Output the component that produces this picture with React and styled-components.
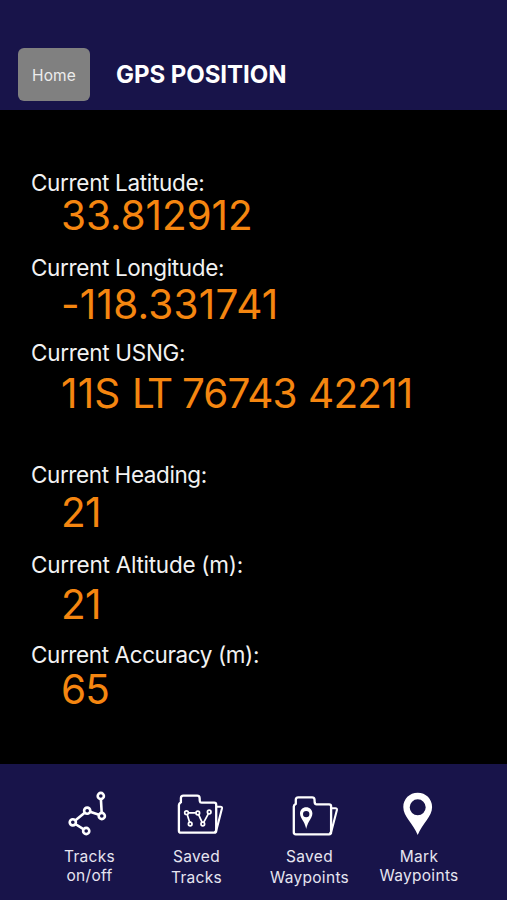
import React from "react";
import styled, { createGlobalStyle } from "styled-components";

const GlobalStyle = createGlobalStyle`
	* {
		box-sizing: border-box;
	}
	body {
		margin: 0;
		background-color: #000;
		font-family: Inter, Roboto, "Liberation Sans", sans-serif;
	}
`;

const Screen = styled.div`
	display: flex;
	flex-direction: column;
	width: 507px;
	height: 900px;
	overflow: hidden;
	background-color: #000;
`;

const Header = styled.header`
	display: flex;
	align-items: flex-start;
	height: 110px;
	padding: 48px 18px 0;
	background-color: #18144a;
`;

const HomeButton = styled.button`
	width: 72px;
	height: 53px;
	padding: 1px 0 0;
	border: 0;
	border-radius: 6px;
	background-color: #808080;
	color: #ececec;
	font-family: inherit;
	font-size: 15.5px;
	letter-spacing: 0.1px;
`;

const Title = styled.h1`
	margin: 12px 0 0 26px;
	color: #fff;
	font-size: 24px;
	font-weight: 700;
	line-height: 30px;
	letter-spacing: -0.05px;
	white-space: nowrap;
`;

const Readings = styled.main`
	flex: 1;
	padding: 61px 31px 0;
`;

const Reading = styled.section`
	display: flex;
	flex-direction: column;
	gap: ${(props) => props.$gap}px;
	margin-bottom: ${(props) => props.$after}px;
`;

const Label = styled.div`
	color: #f2f2f2;
	font-size: 22.5px;
	line-height: 24px;
	letter-spacing: ${(props) => props.$spacing}px;
	white-space: nowrap;
`;

const Value = styled.div`
	padding-left: 30px;
	color: #f58610;
	font-size: 40.5px;
	line-height: 40px;
	white-space: nowrap;
`;

const Group = styled.span`
	margin-right: ${(props) => props.$after || 0}px;
	letter-spacing: ${(props) => props.$spacing || 0}px;
`;

const Toolbar = styled.nav`
	display: flex;
	height: 136px;
	padding: 27px 33px 0 35px;
	background-color: #18144a;
`;

const Tool = styled.a`
	display: flex;
	flex-direction: column;
	align-items: center;
	width: ${(props) => props.$width}px;
	color: #e6e5f0;
	font-size: 15.5px;
	line-height: ${(props) => props.$line}px;
	letter-spacing: 0.3px;
	text-align: center;

	svg {
		display: block;
		flex: none;
		margin-bottom: ${(props) => props.$space}px;
		overflow: visible;
	}
`;

const TracksIcon = () => (
	<svg width="48" height="48" viewBox="0 0 48 48" fill="none" stroke="#fff" strokeWidth="2.6">
		<path d="M34.9 8l.8 14M33 23.8L24 20.7M19 21.5L9.2 29.4M9.3 33L17.8 38.4" />
		<circle cx="34.8" cy="5" r="3.1" />
		<circle cx="35.8" cy="25" r="3.1" />
		<circle cx="21.2" cy="19.7" r="3.1" />
		<circle cx="6.8" cy="31.3" r="3.1" />
		<circle cx="20.2" cy="40" r="3.1" />
	</svg>
);

const Folder = () => (
	<>
		<path
			d="M10.9 11.2V7.2q0-2.5 2.5-2.5h13.8q2.2 0 2.4 2.2l.2 3.2q.2 1.6 1.8 1.6H44.2q2 0 2 2V39.7q0 2-2 2H10.9q-2 0-2-2V14q0-1.6 2-2.8z"
			strokeWidth="2.3"
		/>
		<path d="M46.2 15.7h4.3q1.8 0 1.5 1.6L47.2 36q-.7 3.6-2.5 5.4" strokeWidth="2.1" />
	</>
);

const SavedTracksIcon = () => (
	<svg width="54" height="48" viewBox="0 0 54 48" fill="none" stroke="#fff">
		<Folder />
		<g strokeWidth="1.7">
			<path d="M18.4 21.8h7.4M17.2 23.6L19.6 31.2M28.6 23.7L32 31.2M33.7 31.3L38.3 22.8" />
			<circle cx="16.5" cy="21.7" r="1.8" />
			<circle cx="27.8" cy="22" r="1.8" />
			<circle cx="39.2" cy="21" r="1.8" />
			<circle cx="20.2" cy="33" r="1.8" />
			<circle cx="32.8" cy="33" r="1.8" />
		</g>
	</svg>
);

const SavedWaypointsIcon = () => (
	<svg width="54" height="48" viewBox="0 0 54 48" fill="none" stroke="#fff">
		<g transform="translate(1.9 1.6)">
			<Folder />
		</g>
		<path
			d="M23.2 16.3C19.7 16.3 17 19 17 22.6C17 25.4 18.8 27.7 20.4 30.5C21.8 33 22.6 35.4 23.2 38C23.8 35.4 24.6 33 26 30.5C27.6 27.7 29.4 25.4 29.4 22.6C29.4 19 26.7 16.3 23.2 16.3zM23.2 19.9a3.2 3.2 0 1 1 0 6.4a3.2 3.2 0 0 1 0-6.4z"
			fill="#fff"
			fillRule="evenodd"
			stroke="none"
		/>
	</svg>
);

const MarkIcon = () => (
	<svg width="48" height="48" viewBox="0 0 48 48" fill="#fff" fillRule="evenodd">
		<path d="M22.7 1.7C14.5 1.7 8.3 7.9 8.3 16C8.3 21 10.7 24.7 13.4 28.7C17 34 20.5 38.3 22.7 44C24.9 38.3 28.4 34 32 28.7C34.7 24.7 37.1 21 37.1 16C37.1 7.9 30.9 1.7 22.7 1.7zM22.7 8.3a8 8 0 1 1 0 16a8 8 0 0 1 0-16z" />
	</svg>
);

const readings = [
	{ label: "Current Latitude:", spacing: -0.33, value: [{ text: "33.812912", spacing: -0.1 }], gap: 1, after: 20 },
	{ label: "Current Longitude:", spacing: -0.36, value: [{ text: "-118.331741", spacing: 0.2 }], gap: 5, after: 16 },
	{
		label: "Current USNG:",
		spacing: -0.3,
		value: [
			{ text: "11S", spacing: 0.2 },
			{ text: "LT", spacing: -4, after: 1.5 },
			{ text: "76743", spacing: -0.9 },
			{ text: "42211", spacing: -0.8 },
		],
		gap: 9,
		after: 49,
	},
	{ label: "Current Heading:", spacing: -0.4, value: [{ text: "21", spacing: -0.8 }], gap: 6, after: 20 },
	{ label: "Current Altitude (m):", spacing: -0.26, value: [{ text: "21", spacing: -0.8 }], gap: 8, after: 18 },
	{ label: "Current Accuracy (m):", spacing: -0.4, value: [{ text: "65", spacing: -0.8 }], gap: 3, after: 0 },
];

const tools = [
	{ lines: ["Tracks", "on/off"], Icon: TracksIcon, width: 109, line: 19, space: 8 },
	{ lines: ["Saved", "Tracks"], Icon: SavedTracksIcon, width: 105, line: 21, space: 7 },
	{ lines: ["Saved", "Waypoints"], Icon: SavedWaypointsIcon, width: 121, line: 21, space: 7 },
	{ lines: ["Mark", "Waypoints"], Icon: MarkIcon, width: 98, line: 19, space: 8 },
];

const App = () => {
	return (
		<>
			<GlobalStyle />
			<Screen>
				<Header>
					<HomeButton>Home</HomeButton>
					<Title>GPS POSITION</Title>
				</Header>
				<Readings>
					{readings.map((item) => (
						<Reading key={item.label} $gap={item.gap} $after={item.after}>
							<Label $spacing={item.spacing}>{item.label}</Label>
							<Value>
								{item.value.map((part, i) => (
									<React.Fragment key={part.text}>
										{i > 0 && " "}
										<Group $spacing={part.spacing} $after={part.after}>
											{part.text}
										</Group>
									</React.Fragment>
								))}
							</Value>
						</Reading>
					))}
				</Readings>
				<Toolbar>
					{tools.map(({ lines, Icon, width, line, space }) => (
						<Tool key={lines.join(" ")} $width={width} $line={line} $space={space}>
							<Icon />
							<span>{lines[0]}</span>
							<span>{lines[1]}</span>
						</Tool>
					))}
				</Toolbar>
			</Screen>
		</>
	);
};

export default App;
